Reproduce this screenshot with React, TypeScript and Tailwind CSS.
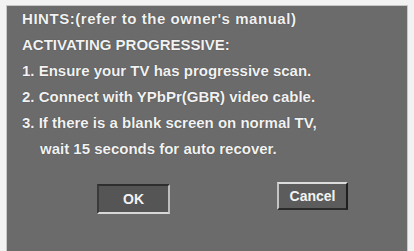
const lines = [
  { text: "HINTS:(refer to the owner's manual)", cls: "tracking-[0.55px]" },
  { text: "ACTIVATING PROGRESSIVE:", cls: "" },
  { text: "1. Ensure your TV has progressive scan.", cls: "" },
  { text: "2. Connect with YPbPr(GBR) video cable.", cls: "" },
  { text: "3. If there is a blank screen on normal TV,", cls: "" },
  { text: "wait 15 seconds for auto recover.", cls: "pl-[18px]" },
];

const App = () => {
  return (
    <div className="w-[414px] h-[251px] bg-[#f2f2f2] pt-[5px] pl-[6px] pr-[6px] overflow-hidden">
      <div className="h-full border-l border-t border-r border-[#c8c8c8] bg-[#6b6b6b] font-['Liberation_Sans',Arial,sans-serif] font-bold text-[#f2f2f2]">
        <div className="flex flex-col pl-[15px] text-[15px] leading-[26px] [text-shadow:0_0_1px_rgba(0,0,0,0.5)]">
          {lines.map((l) => (
            <div key={l.text} className={l.cls}>
              {l.text}
            </div>
          ))}
        </div>
        <div className="flex items-start mt-[20px]">
          <div className="ml-[90px] mt-[2px] w-[73px] h-[30px] flex items-center justify-center bg-[#555555] border-t-2 border-l-2 border-b-2 border-r-2 border-t-[#2e2e2e] border-l-[#3a3a3a] border-b-[#d8d8d8] border-r-[#bdbdbd] text-[14px]">
            OK
          </div>
          <div className="ml-[107px] w-[71px] h-[28px] flex items-center justify-center bg-[#5c5c5c] border-t-2 border-l-2 border-b-2 border-r-2 border-t-[#dcdcdc] border-l-[#c4c4c4] border-b-[#2a2a2a] border-r-[#1f1f1f] text-[14px]">
            Cancel
          </div>
        </div>
      </div>
    </div>
  );
};

export default App;
